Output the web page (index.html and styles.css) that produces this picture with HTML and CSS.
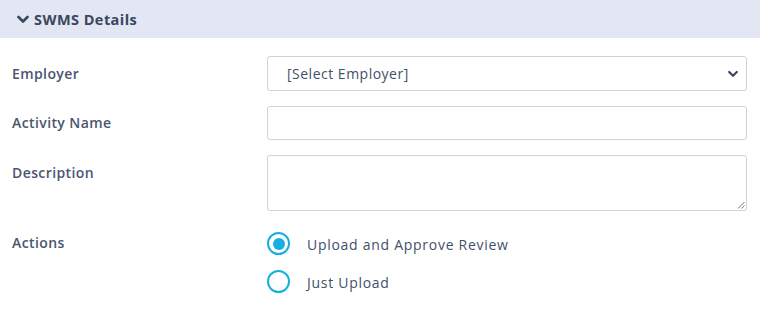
FILE: index.html
```html
<!DOCTYPE html>
<html>
<head>
<meta charset="utf-8">
<link rel="stylesheet" href="styles.css">
</head>
<body>
<div class="panel">
  <div class="panel-head">
    <svg class="chev" width="12" height="9" viewBox="0 0 12 9"><path d="M1.5 2 L6 6.5 L10.5 2" fill="none" stroke="#3b4660" stroke-width="2.6" stroke-linecap="round" stroke-linejoin="round"/></svg>
    <span class="title">SWMS Details</span>
  </div>
  <div class="form">
    <div class="row r-select">
      <label class="lbl">Employer</label>
      <div class="ctrl select">
        <span>[Select Employer]</span>
        <svg width="10" height="8" viewBox="0 0 10 8"><path d="M1.2 2 L5 5.8 L8.8 2" fill="none" stroke="#3b4660" stroke-width="2.2" stroke-linecap="round" stroke-linejoin="round"/></svg>
      </div>
    </div>
    <div class="row r-input">
      <label class="lbl">Activity Name</label>
      <div class="ctrl input"></div>
    </div>
    <div class="row r-area">
      <label class="lbl">Description</label>
      <div class="ctrl area">
        <svg class="grip" width="8" height="8" viewBox="0 0 8 8"><path d="M7.5 1 L1 7.5 M7.5 4.5 L4.5 7.5" stroke="#777" stroke-width="1"/></svg>
      </div>
    </div>
    <div class="row r-radio">
      <label class="lbl">Actions</label>
      <div class="radios">
        <div class="radio on"><span class="dot"></span><span class="rt">Upload and Approve Review</span></div>
        <div class="radio"><span class="dot"></span><span class="rt">Just Upload</span></div>
      </div>
    </div>
  </div>
</div>
</body>
</html>
```
FILE: styles.css
```css
* { box-sizing: border-box; }
body { margin: 0; background: #fff; font-family: "Open Sans", "DejaVu Sans", sans-serif; color: #3d4a62; }
.panel-head { height: 38px; background: #e2e7f3; display: flex; align-items: center; padding-left: 17px; }
.chev { margin-right: 5px; margin-top: 1px; }
.title { font-weight: 700; font-size: 14.5px; color: #3b4660; letter-spacing: 0.45px; }
.form { padding: 18px 13px 0 12px; }
.row { display: flex; }
.lbl { width: 255px; font-size: 14px; font-weight: 600; color: #4a5670; letter-spacing: 0.4px; }
.ctrl { width: 480px; border: 1px solid #cfd3da; border-radius: 3px; background: #fff; }
.r-select .lbl { line-height: 35px; }
.select { height: 35px; display: flex; align-items: center; justify-content: space-between; padding: 0 8px 0 19px; font-size: 14px; color: #43506a; letter-spacing: 0.5px; }
.select svg { margin-top: 1px; }
.r-input { margin-top: 15px; }
.r-input .lbl { line-height: 34px; }
.input { height: 34px; }
.r-area { margin-top: 15px; }
.r-area .lbl { padding-top: 8px; line-height: 20px; }
.area { height: 56px; position: relative; }
.grip { position: absolute; right: 1px; bottom: 1px; }
.r-radio { margin-top: 21px; }
.r-radio .lbl { line-height: 20px; padding-top: 1px; }
.radios { display: flex; flex-direction: column; gap: 15px; }
.radio { display: flex; align-items: center; height: 23px; }
.dot { width: 23px; height: 23px; border-radius: 50%; border: 2.5px solid #17aee0; margin-right: 17px; display: flex; align-items: center; justify-content: center; }
.radio.on .dot::after { content: ""; width: 12px; height: 12px; border-radius: 50%; background: #17aee0; }
.rt { font-size: 14px; color: #43506a; letter-spacing: 0.72px; padding-top: 1px; }
```
